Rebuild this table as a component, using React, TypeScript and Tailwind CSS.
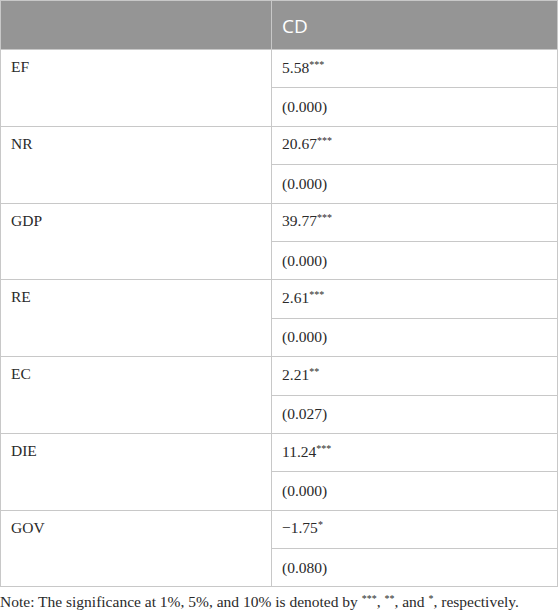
import React from 'react';

const rows = [
  { name: 'EF', value: '5.58', stars: '***', p: '(0.000)' },
  { name: 'NR', value: '20.67', stars: '***', p: '(0.000)' },
  { name: 'GDP', value: '39.77', stars: '***', p: '(0.000)' },
  { name: 'RE', value: '2.61', stars: '***', p: '(0.000)' },
  { name: 'EC', value: '2.21', stars: '**', p: '(0.027)' },
  { name: 'DIE', value: '11.24', stars: '***', p: '(0.000)' },
  { name: 'GOV', value: '\u22121.75', stars: '*', p: '(0.080)' }
];

export default function App() {
  return <div className="w-[558px] bg-white text-[#2a2a2a] font-['Liberation_Serif',serif]">
      <table className="w-full border-collapse border border-[#c8c8c8] text-[15.5px] leading-[22px]">
        <thead>
          <tr className="bg-[#959595] h-[49px]">
            <th className="w-[271px] border border-[#c8c8c8]"></th>
            <th className="text-left pl-[10px] pt-[2px] text-white font-normal text-[19px] font-['Open_Sans',sans-serif] border border-[#c8c8c8]">CD</th>
          </tr>
        </thead>
        <tbody>
          {rows.map(r => <React.Fragment key={r.name}>
              <tr className="h-[38.4px]">
                <td rowSpan={2} className="align-top pl-[10px] pt-[6px] border border-[#c8c8c8]">{r.name}</td>
                <td className="pl-[10px] pb-[2px] border border-[#c8c8c8]">
                  {r.value}<sup className="text-[10px] leading-none">{r.stars}</sup>
                </td>
              </tr>
              <tr className="h-[38.4px]">
                <td className="pl-[10px] border border-[#c8c8c8]">{r.p}</td>
              </tr>
            </React.Fragment>)}
        </tbody>
      </table>
      <p className="mt-[4px] text-[15.5px] leading-[22px]">
        Note: The significance at 1%, 5%, and 10% is denoted by <sup className="text-[10px] leading-none">***</sup>, <sup className="text-[10px] leading-none">**</sup>, and <sup className="text-[10px] leading-none">*</sup>, respectively.
      </p>
    </div>;
}
